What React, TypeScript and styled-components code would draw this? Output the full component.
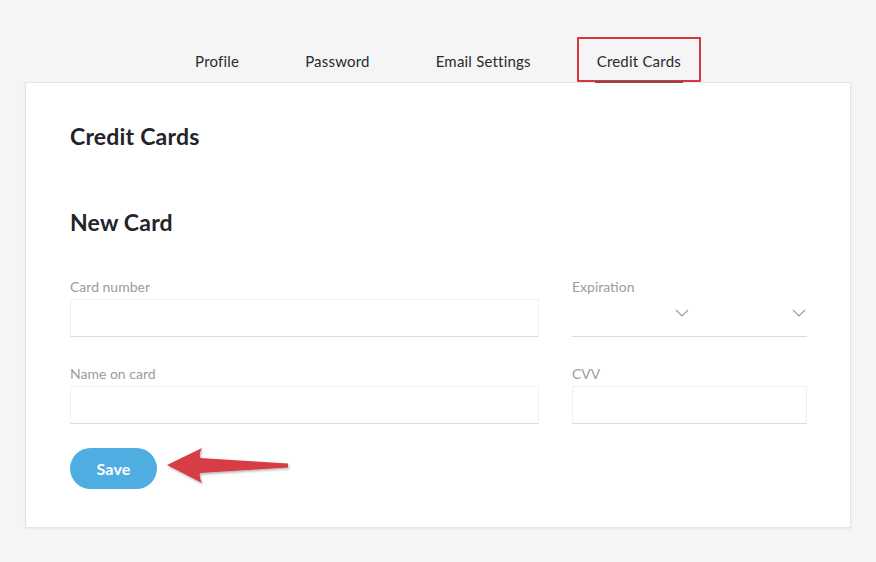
import React from "react";
import styled, { createGlobalStyle } from "styled-components";

const Global = createGlobalStyle`
  html, body { margin: 0; padding: 0; background: #f4f5f4; }
  body { font-family: Lato, "Open Sans", Arial, sans-serif; -webkit-font-smoothing: antialiased; }
  * { box-sizing: border-box; }
`;

const Page = styled.div`
  width: 876px;
  height: 562px;
  background: #f4f5f4;
  padding: 37px 25px 0;
`;

const Tabs = styled.nav`
  display: flex;
  justify-content: center;
  gap: 26px;
  height: 45px;
`;

const Tab = styled.div<{ $active?: boolean; $marked?: boolean }>`
  position: relative;
  padding: 2px 18px 0;
  display: flex;
  align-items: center;
  font-size: 15px;
  letter-spacing: 0.2px;
  color: #2a2a2f;
  border: 2px solid ${(p) => (p.$marked ? "#d8363d" : "transparent")};
  border-radius: 1px;
  ${(p) =>
    p.$active &&
    `
    &::after {
      content: "";
      position: absolute;
      left: 16px;
      right: 16px;
      bottom: -3px;
      height: 2px;
      background: #8a4a4c;
    }
  `}
`;

const Card = styled.section`
  background: #fff;
  border: 1px solid #e4e5e4;
  box-shadow: 0 1px 2px rgba(0, 0, 0, 0.06);
  height: 446px;
  padding: 40px 44px 0 44px;
`;

const Title = styled.h2<{ $gap?: number }>`
  margin: 0 0 ${(p) => p.$gap ?? 0}px;
  font-size: 23px;
  line-height: 26px;
  letter-spacing: 0.2px;
  font-weight: 700;
  color: #23232a;
`;

const Form = styled.div`
  display: grid;
  grid-template-columns: 469px 235px;
  column-gap: 33px;
  row-gap: 29px;
  margin-top: 44px;
`;

const Field = styled.div`
  display: flex;
  flex-direction: column;
`;

const Label = styled.label`
  font-size: 14px;
  line-height: 16px;
  color: #9c9c9c;
  margin-bottom: 4px;
`;

const Input = styled.div`
  height: 38px;
  border: 1px solid #f0f0f0;
  border-bottom: 1px solid #dcdcdc;
  background: #fff;
`;

const Selects = styled.div`
  height: 38px;
  display: grid;
  grid-template-columns: 1fr 1fr;
  border-bottom: 1px solid #dcdcdc;
`;

const Select = styled.div`
  display: flex;
  align-items: flex-start;
  justify-content: flex-end;
  padding: 10px 1px 0 0;
`;

const Actions = styled.div`
  position: relative;
  margin-top: 24px;
  display: flex;
`;

const SaveButton = styled.button`
  width: 87px;
  height: 41px;
  border: none;
  border-radius: 21px;
  background: #4eaee2;
  color: #fff;
  font-family: inherit;
  font-size: 16px;
  font-weight: 700;
  letter-spacing: 0.2px;
  cursor: pointer;
`;

const Annotation = styled.svg`
  position: absolute;
  left: 90px;
  top: -8px;
  overflow: visible;
`;

const Chevron = () => (
  <svg width="14" height="8" viewBox="0 0 14 8">
    <path d="M1 1 L7 7 L13 1" fill="none" stroke="#9a9a9a" strokeWidth="1.1" />
  </svg>
);

export default function App() {
  return (
    <Page>
      <Global />
      <Tabs>
        <Tab>Profile</Tab>
        <Tab>Password</Tab>
        <Tab>Email Settings</Tab>
        <Tab $active $marked>
          Credit Cards
        </Tab>
      </Tabs>
      <Card>
        <Title $gap={60}>Credit Cards</Title>
        <Title>New Card</Title>
        <Form>
          <Field>
            <Label>Card number</Label>
            <Input />
          </Field>
          <Field>
            <Label>Expiration</Label>
            <Selects>
              <Select>
                <Chevron />
              </Select>
              <Select>
                <Chevron />
              </Select>
            </Selects>
          </Field>
          <Field>
            <Label>Name on card</Label>
            <Input />
          </Field>
          <Field>
            <Label>CVV</Label>
            <Input />
          </Field>
        </Form>
        <Actions>
          <SaveButton>Save</SaveButton>
          <Annotation width="140" height="50" viewBox="0 0 140 50">
            <defs>
              <filter id="sh" x="-10%" y="-20%" width="130%" height="160%">
                <feDropShadow dx="1" dy="1.5" stdDeviation="1.2" floodColor="#000" floodOpacity="0.3" />
              </filter>
            </defs>
            <path
              d="M7 25 L42 8 Q39 13 40 18 L128 23.5 L128 27.5 L40 33 Q39 38 42 43 Z"
              fill="#d63d44"
              filter="url(#sh)"
            />
          </Annotation>
        </Actions>
      </Card>
    </Page>
  );
}
